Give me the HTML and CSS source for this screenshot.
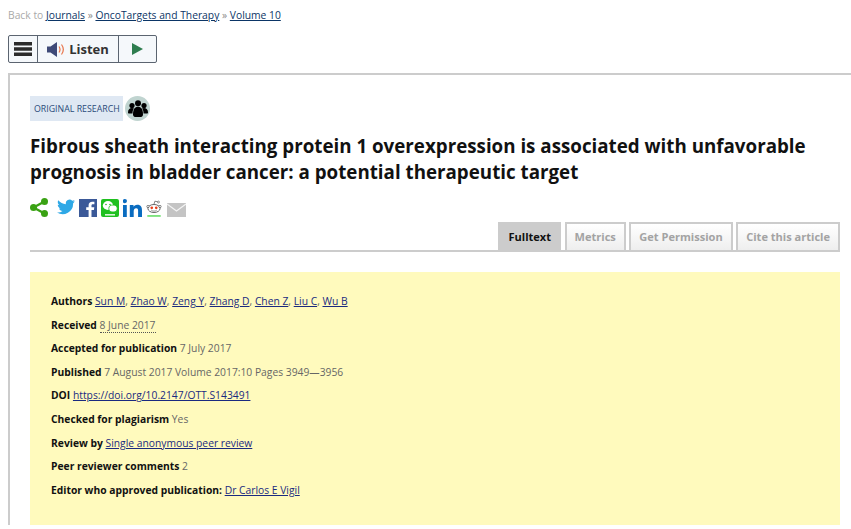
FILE: index.html
```html
<!DOCTYPE html>
<html lang="en">
<head>
    <meta charset="UTF-8">
    <title>Fibrous sheath interacting protein 1 overexpression</title>
    <link rel="stylesheet" href="styles.css">
</head>
<body>

<div class="breadcrumb">Back to <a href="#">Journals</a> <span class="sep">»</span> <a href="#">OncoTargets and Therapy</a> <span class="sep">»</span> <a href="#">Volume 10</a></div>

<div class="player">
    <div class="player-btn menu-btn">
        <svg width="18" height="14" viewBox="0 0 18 14"><path fill="#2b2b2b" d="M0 0h18v3.600H0zM0 5.200h18v3.600H0zM0 10.400h18V14H0z"/></svg>
    </div>
    <div class="player-btn listen-btn">
        <svg width="18" height="15" viewBox="0 0 18 15"><path fill="#3f4a78" d="M0 4.500h3.500L10 0v15l-6.500-4.500H0z"/><path fill="none" stroke="#e8744a" stroke-width="1.200" d="M12 4.500c1.200 1.800 1.200 4.200 0 6M14.500 2.500c2.200 3 2.200 7 0 10"/></svg>
        <span>Listen</span>
    </div>
    <div class="player-btn play-btn">
        <svg width="11" height="12" viewBox="0 0 11 12"><path fill="#2e7d4f" d="M0 0l11 6-11 6z"/></svg>
    </div>
</div>

<div class="article">
    <div class="type-row">
        <span class="type-label">ORIGINAL RESEARCH</span>
        <span class="peer-icon">
            <svg width="20" height="18" viewBox="0 0 20 18"><g fill="#000"><circle cx="4" cy="5.500" r="2.600"/><circle cx="10" cy="3.200" r="3"/><circle cx="16" cy="5.500" r="2.600"/><path d="M0 12.500c0-3 1.500-4.500 4-4.500 1 0 1.500.2 2 .5-1 1-1.500 2.500-1.500 5H1c-.6 0-1-.4-1-1zM20 12.500c0-3-1.500-4.500-4-4.500-1 0-1.500.2-2 .5 1 1 1.500 2.500 1.500 5H19c.6 0 1-.4 1-1z"/><path d="M5 14.500C5 9 7 6.800 10 6.800s5 2.200 5 7.700c0 1.500-1 2.500-2 2.500H7c-1 0-2-1-2-2.500z"/></g></svg>
        </span>
    </div>

    <h1>Fibrous sheath interacting protein 1 overexpression is associated with unfavorable prognosis in bladder cancer: a potential therapeutic target</h1>

    <div class="share-row">
        <svg width="18" height="19" viewBox="0 0 18 19"><g fill="#3aa214"><circle cx="3.500" cy="9.500" r="3.500"/><circle cx="14.500" cy="3.500" r="3.500"/><circle cx="14.500" cy="15.500" r="3.500"/></g><path stroke="#3aa214" stroke-width="2.400" d="M3.500 9.500l11-6M3.500 9.500l11 6"/></svg>
        <svg class="tw" width="18" height="16" viewBox="0 0 24 20"><path fill="#2ea8e6" d="M24 2.400c-.9.400-1.800.7-2.800.800 1-.6 1.800-1.600 2.200-2.700-1 .6-2 1-3.100 1.200A4.900 4.900 0 0 0 11.900 6.200C7.800 6 4.200 4 1.700.9c-1.300 2.200-.7 5.100 1.500 6.600-.8 0-1.600-.2-2.200-.6 0 2.300 1.600 4.400 3.900 4.900-.7.200-1.500.2-2.200.1.600 2 2.400 3.400 4.600 3.400A9.900 9.900 0 0 1 0 17.300 14 14 0 0 0 21.500 4.900c1-.7 1.800-1.500 2.500-2.500z"/></svg>
        <svg width="18" height="18" viewBox="0 0 18 18"><rect width="18" height="18" fill="#3b5998"/><path fill="#fff" d="M12.500 18v-7h2.400l.4-2.800h-2.800V6.600c0-.8.200-1.400 1.400-1.400h1.500V2.800c-.3 0-1.100-.1-2.200-.1-2.200 0-3.600 1.300-3.600 3.700v1.800H7.200V11h2.400v7z"/></svg>
        <svg width="18" height="18" viewBox="0 0 18 18"><rect width="18" height="18" rx="2" fill="#1fc01f"/><ellipse cx="7" cy="6.500" rx="5.200" ry="4.400" fill="#fff"/><ellipse cx="12" cy="9.500" rx="4.200" ry="3.500" fill="#fff" stroke="#1fc01f" stroke-width=".8"/><circle cx="5" cy="5.500" r=".8" fill="#1fc01f"/><circle cx="9" cy="5.500" r=".8" fill="#1fc01f"/><rect x="4" y="15" width="10" height="1.600" fill="#d8f5d8"/></svg>
        <svg width="19" height="18" viewBox="0 0 19 18"><path fill="#0a6cc0" d="M0 6h3.800v12H0zM1.900 0a2.100 2.100 0 1 1 0 4.200 2.100 2.100 0 0 1 0-4.200zM6.800 6h3.700v1.700c.6-1 1.800-2 3.700-2 3.900 0 4.800 2.500 4.800 5.800V18h-3.900v-5.700c0-1.400 0-3.100-1.900-3.100s-2.500 1.500-2.500 3V18H6.800z"/></svg>
        <svg width="16" height="17" viewBox="0 0 17 19"><path fill="none" stroke="#555" stroke-width=".8" d="M8.500 4.500l1-3.200 3 .7"/><circle cx="13.500" cy="2.300" r="1.100" fill="none" stroke="#555" stroke-width=".7"/><ellipse cx="8.500" cy="9.500" rx="6.800" ry="4.500" fill="#fff" stroke="#444" stroke-width=".9"/><circle cx="1.800" cy="7.300" r="1.300" fill="#fff" stroke="#444" stroke-width=".7"/><circle cx="15.200" cy="7.300" r="1.300" fill="#fff" stroke="#444" stroke-width=".7"/><circle cx="6" cy="8.800" r="1.500" fill="#e8401c"/><circle cx="11" cy="8.800" r="1.500" fill="#e8401c"/><path fill="none" stroke="#555" stroke-width=".7" d="M5.500 11.500c1.800 1.200 4.200 1.200 6 0"/><rect x="1" y="17.200" width="15" height="1.300" fill="#2fd02f"/></svg>
        <svg class="mail" width="19" height="14" viewBox="0 0 19 14"><rect width="19" height="14" fill="#c4c4c4"/><path fill="none" stroke="#f4f4f4" stroke-width="1.300" d="M0 1l9.500 7L19 1"/></svg>
    </div>

    <div class="tabs">
        <a class="tab active" href="#">Fulltext</a>
        <a class="tab" href="#">Metrics</a>
        <a class="tab" href="#">Get Permission</a>
        <a class="tab" href="#">Cite this article</a>
    </div>

    <div class="info-box">
        <p><b>Authors</b> <a href="#">Sun M</a>, <a href="#">Zhao W</a>, <a href="#">Zeng Y</a>, <a href="#">Zhang D</a>, <a href="#">Chen Z</a>, <a href="#">Liu C</a>, <a href="#">Wu B</a></p>
        <p><b>Received</b> <span class="dotted">8 June 2017</span></p>
        <p><b>Accepted for publication</b> 7 July 2017</p>
        <p><b>Published</b> 7 August 2017 Volume 2017:10 Pages 3949—3956</p>
        <p><b>DOI</b> <a href="#">https://doi.org/10.2147/OTT.S143491</a></p>
        <p><b>Checked for plagiarism</b> Yes</p>
        <p><b>Review by</b> <a href="#">Single anonymous peer review</a></p>
        <p><b>Peer reviewer comments</b> 2</p>
        <p><b>Editor who approved publication:</b> <a href="#">Dr Carlos E Vigil</a></p>
    </div>
</div>

</body>
</html>
```

FILE: styles.css
```css
html {
    overflow: hidden;
}
body {
    margin: 0;
    height: 529px;
    overflow: hidden;
    font-family: "Open Sans", sans-serif;
    font-size: 10.300px;
    color: #666;
    background-color: #fff;
}
a {
    color: #1a2a80;
}
.breadcrumb {
    padding: 8px 0 0 8px;
    line-height: 14px;
    color: #aaa;
}
.breadcrumb a {
    color: #0b3566;
}
.sep {
    color: #888;
}
.player {
    display: flex;
    width: max-content;
    height: 26px;
    margin: 13px 0 0 8px;
    border: 1px solid #5b6470;
    border-radius: 2px;
    background-color: #f5f8fb;
}
.player-btn {
    display: flex;
    align-items: center;
    justify-content: center;
    border-right: 1px solid #5b6470;
}
.menu-btn {
    width: 28px;
}
.listen-btn {
    width: 80px;
    gap: 4px;
    font-size: 13px;
    font-weight: 700;
    color: #333;
}
.play-btn {
    width: 37px;
    border-right: none;
}
.article {
    margin: 10px 0 0 8px;
    padding: 21px 11px 0 20px;
    border-top: 2px solid #ccc;
    border-left: 2px solid #ccc;
}
.type-row {
    display: flex;
    align-items: center;
    gap: 2px;
}
.type-label {
    padding: 1px 3.500px 0 4px;
    line-height: 24px;
    font-size: 8.800px;
    color: #2a4a7a;
    background-color: #dfe8f3;
}
.peer-icon {
    display: flex;
    align-items: center;
    justify-content: center;
    width: 25px;
    height: 25px;
    border-radius: 50%;
    background-color: #c0d4d0;
}
h1 {
    margin: 12px 0 0;
    font-size: 18.750px;
    line-height: 26px;
    font-weight: 700;
    color: #111;
}
.share-row {
    display: flex;
    align-items: flex-end;
    gap: 4px;
    height: 19px;
    margin-top: 13px;
}
.tw {
    margin-left: 5px;
    margin-bottom: 2px;
}
.mail {
    margin-left: 1px;
}
.tabs {
    display: flex;
    justify-content: flex-end;
    gap: 3.500px;
    margin-top: 5px;
    border-bottom: 2px solid #ccc;
}
.tab {
    padding: 0 8px;
    line-height: 26px;
    font-size: 11.050px;
    font-weight: 700;
    color: #a3a3a3;
    text-decoration: none;
    border: 2px solid #ccc;
    border-bottom: none;
    background: linear-gradient(#fff, #eee);
}
.tab.active {
    color: #111;
    background: #ccc;
}
.info-box {
    margin-top: 20px;
    padding: 22px 21px 19px;
    background-color: #fffabd;
}
.info-box p {
    margin: 0 0 9.600px;
    line-height: 14px;
}
.info-box b {
    color: #111;
}
.dotted {
    border-bottom: 1px dotted #555;
}
```
